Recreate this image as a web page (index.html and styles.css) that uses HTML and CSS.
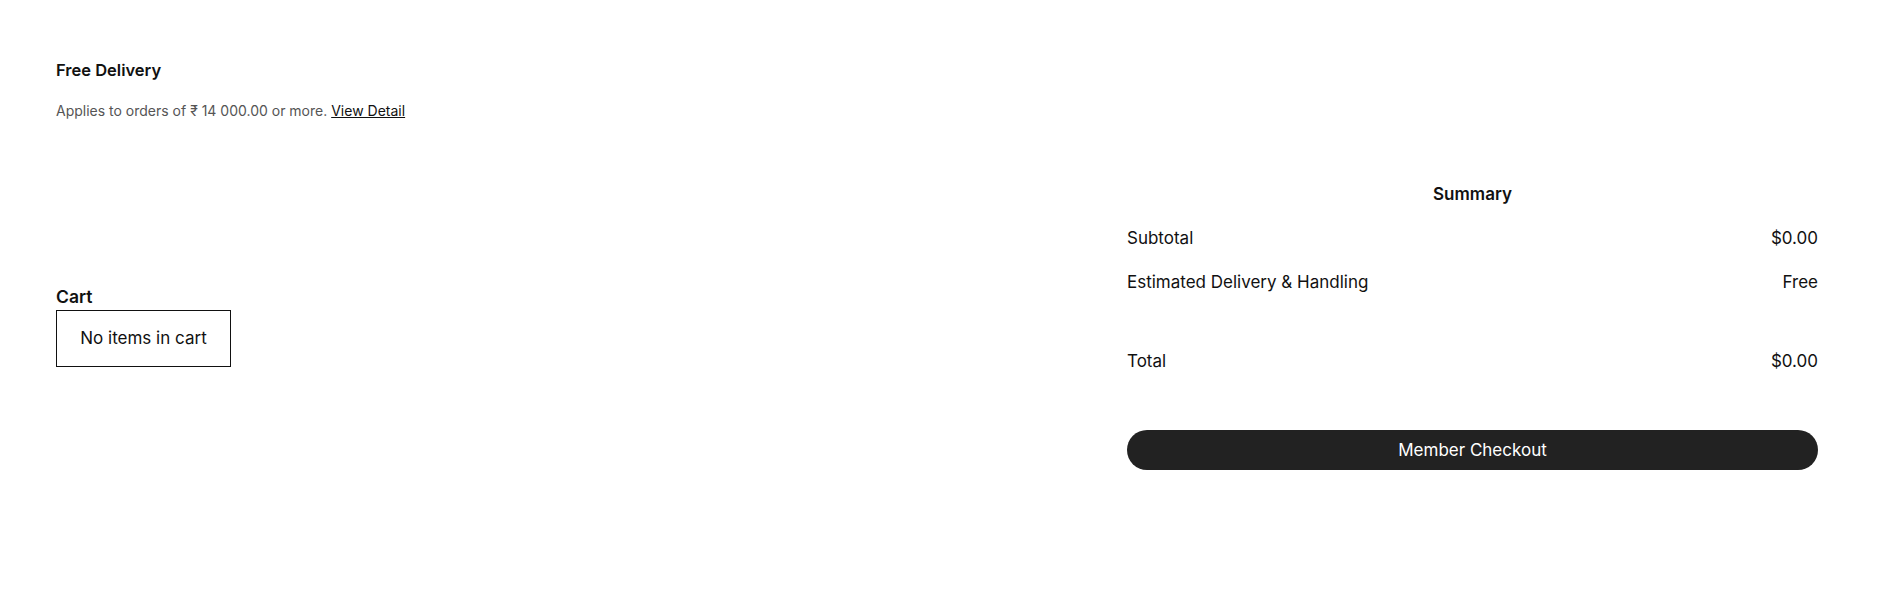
FILE: index.html
```html
<!DOCTYPE html>
<html lang="en">
<head>
<meta charset="utf-8">
<title>Cart</title>
<link rel="stylesheet" href="styles.css">
</head>
<body>
<div class="page">
  <section class="promo">
    <h3 class="promo-title">Free Delivery</h3>
    <p class="promo-text">Applies to orders of ₹ 14 000.00 or more. <a href="#" class="promo-link">View Detail</a></p>
  </section>
  <section class="main">
    <div class="cart">
      <h2 class="cart-title">Cart</h2>
      <div class="cart-empty">No items in cart</div>
    </div>
    <aside class="summary">
      <h2 class="summary-title">Summary</h2>
      <div class="summary-row"><span>Subtotal</span><span>$0.00</span></div>
      <div class="summary-row"><span>Estimated Delivery &amp; Handling</span><span>Free</span></div>
      <div class="summary-row total"><span>Total</span><span>$0.00</span></div>
      <button class="checkout" type="button">Member Checkout</button>
    </aside>
  </section>
</div>
</body>
</html>
```

FILE: styles.css
```css
* { box-sizing: border-box; }
html, body { margin: 0; padding: 0; background: #fff; }
body {
  font-family: Inter, "Open Sans", sans-serif;
  color: #111;
}
.page {
  padding: 0 76px 0 56px;
}
.promo {
  padding-top: 60px;
}
.promo-title {
  margin: 0;
  font-size: 16.5px;
  font-weight: 600;
  line-height: 20px;
  color: #111;
}
.promo-text {
  margin: 22px 0 0;
  font-size: 14px;
  line-height: 18px;
  color: #555;
}
.promo-link {
  color: #111;
  text-decoration: underline;
}
.main {
  display: flex;
  justify-content: space-between;
  align-items: center;
  margin-top: 64px;
}
.cart-title {
  margin: 0 0 4px;
  font-size: 17.5px;
  font-weight: 600;
  line-height: 18px;
}
.cart-empty {
  width: 175px;
  height: 57px;
  border: 1px solid #111;
  display: flex;
  align-items: center;
  justify-content: center;
  font-size: 17px;
}
.summary {
  width: 691px;
  display: flex;
  flex-direction: column;
}
.summary-title {
  margin: 0 0 24px;
  text-align: center;
  font-size: 17px;
  font-weight: 600;
  line-height: 20px;
}
.summary-row {
  display: flex;
  justify-content: space-between;
  font-size: 17px;
  line-height: 20px;
  margin-bottom: 24px;
}
.summary-row.total {
  margin-top: 35px;
  margin-bottom: 59px;
}
.checkout {
  height: 40px;
  border: none;
  border-radius: 20px;
  background: #222;
  color: #fff;
  font-family: inherit;
  font-size: 17px;
  cursor: pointer;
}
```
